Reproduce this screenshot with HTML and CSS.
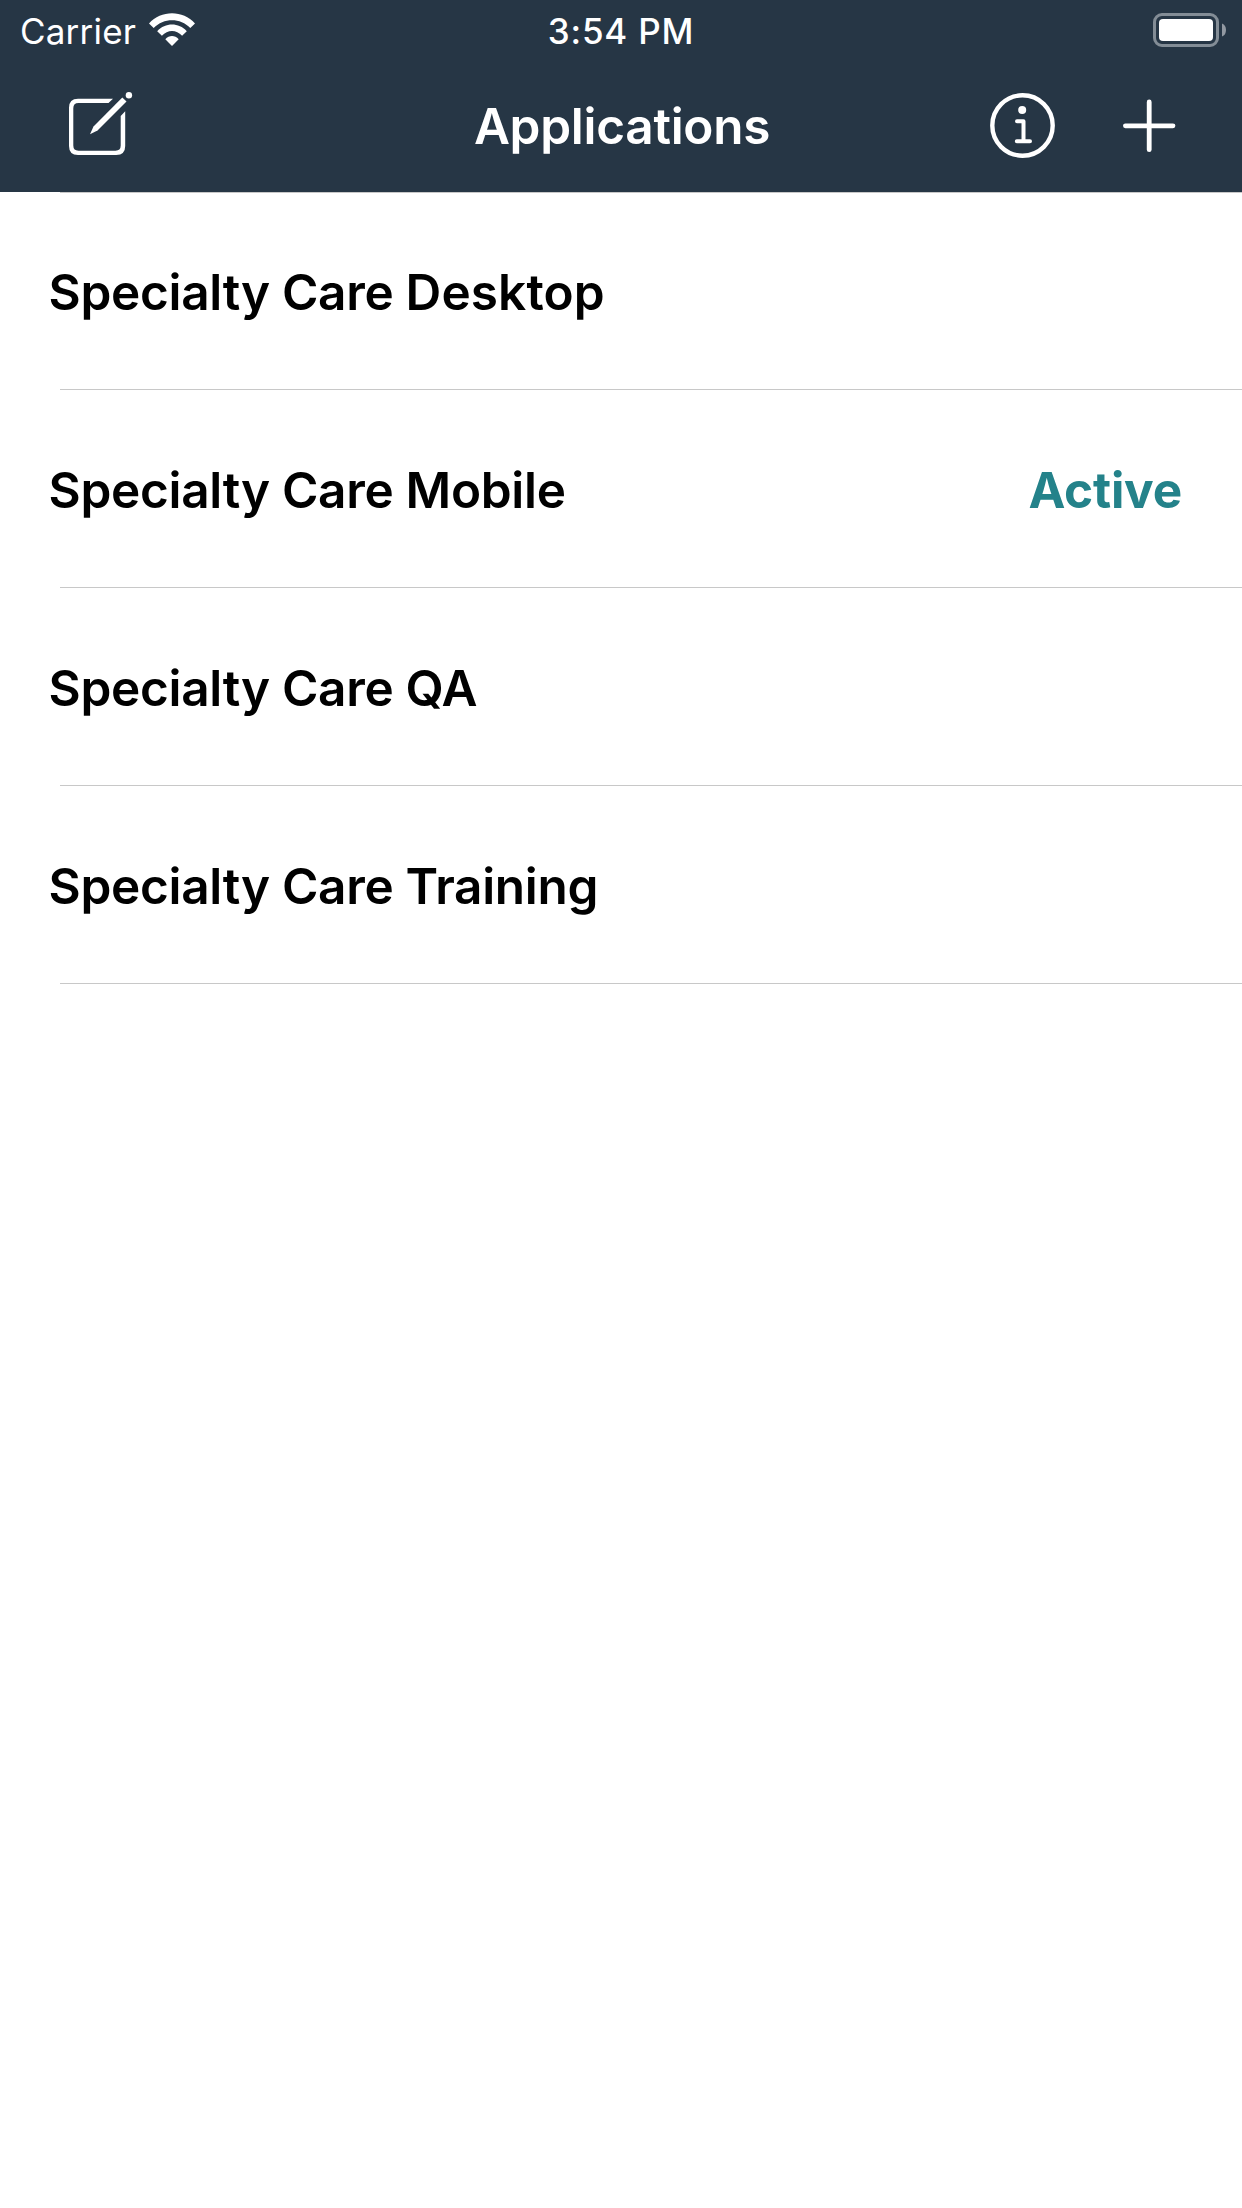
FILE: index.html
```html
<!DOCTYPE html>
<html lang="en">
<head>
<meta charset="utf-8">
<title>Applications</title>
<link rel="stylesheet" href="styles.css">
</head>
<body>
<header class="top">
  <div class="status">
    <div class="status-left">
      <span class="carrier">Carrier</span>
      <svg class="wifi" width="46" height="36" viewBox="149 13 46 36" fill="#fff">
        <path d="M149 23.500C161 9.800 183 9.800 195 23.500L190.300 28.100C180.500 17.700 163.500 17.700 153.700 28.100Z"/>
        <path d="M157.200 31.200C165.300 22.300 178.700 22.300 186.800 31.200L182.100 35.800C176.300 29.500 167.700 29.500 161.900 35.800Z"/>
        <path d="M165.300 39.200C169.200 35 174.800 35 178.700 39.200L172 46Z"/>
      </svg>
    </div>
    <span class="time">3:54 PM</span>
    <div class="status-right">
      <svg class="battery" width="74" height="36" viewBox="1153 13 74 36">
        <rect x="1154.500" y="14.500" width="63" height="31" rx="7.500" fill="none" stroke="#838d96" stroke-width="3"/>
        <rect x="1159" y="19" width="54" height="22" rx="4" fill="#fff"/>
        <path d="M1222 23.500Q1226 25 1226 30T1222 36.500Z" fill="#9299a2"/>
      </svg>
    </div>
  </div>
  <div class="nav">
    <div class="nav-left">
      <svg width="66" height="70" viewBox="68 91 66 70" fill="#fff">
        <path d="M113 98.700L108.500 103H78.500Q73.300 103 73.300 108.200V145.500Q73.300 150.700 78.500 150.700H115.500Q120.700 150.700 120.700 145.500V116L125.200 111.200V146Q125.200 155 116.200 155H78Q69 155 69 146V107.700Q69 98.700 78 98.700Z"/>
        <path d="M90 134.300L93.500 126.500L122.300 97.500L126.500 101.500L97.500 130.500Z"/>
        <circle cx="128.900" cy="95.300" r="3.200"/>
      </svg>
    </div>
    <h1 class="title">Applications</h1>
    <div class="nav-right">
      <svg width="66" height="66" viewBox="990 93 66 66" fill="none" stroke="#fff" stroke-linecap="round" stroke-linejoin="round">
        <circle cx="1022.500" cy="125.500" r="30.200" stroke-width="4.400"/>
        <circle cx="1022.200" cy="110" r="4" fill="#fff" stroke="none"/>
        <path d="M1017 121.300H1023.500V141M1016.800 141.200H1030" stroke-width="4"/>
      </svg>
      <svg width="54" height="54" viewBox="1122 99 54 54" stroke="#fff" stroke-width="4.800" stroke-linecap="round">
        <path d="M1149.200 102V149.700M1125.400 125.800H1173"/>
      </svg>
    </div>
  </div>
</header>
<main class="list">
  <div class="row"><span class="name">Specialty Care <span class="loose">Desktop</span></span></div>
  <div class="row"><span class="name">Specialty Care Mobile</span><span class="active">Active</span></div>
  <div class="row"><span class="name">Specialty Care QA</span></div>
  <div class="row"><span class="name">Specialty Care Training</span></div>
</main>
</body>
</html>
```
FILE: styles.css
```css
* { box-sizing: border-box; }
body {
  margin: 0;
  min-height: 2208px;
  background: #fff;
  color: #000;
  font-family: Inter, "Liberation Sans", sans-serif;
}
.top {
  height: 192px;
  background: #263645;
  color: #fff;
}
.status {
  display: grid;
  grid-template-columns: 1fr auto 1fr;
  align-items: center;
  height: 60px;
  padding: 2px 15px 0;
  font-size: 35px;
  line-height: 58px;
}
.status-left {
  display: flex;
  align-items: center;
  gap: 13px;
  padding-left: 5px;
}
.carrier { width: 116px; letter-spacing: 0.2px; }
.status-right { display: flex; justify-content: flex-end; }
.time { font-weight: 500; letter-spacing: 0.8px; }
.nav {
  display: grid;
  grid-template-columns: 1fr auto 1fr;
  align-items: center;
  height: 132px;
  padding: 0 66px 0 68px;
}
.title {
  margin: 0;
  font-size: 49.5px;
  font-weight: 600;
  letter-spacing: -0.27px;
  line-height: 132px;
}
.nav-right { display: flex; align-items: center; justify-content: flex-end; gap: 66px; }
.nav svg, .status svg { display: block; }
.list {
  background: linear-gradient(#c8c8c8, #c8c8c8) 60px 0 / 100% 1px no-repeat;
}
.row {
  display: flex;
  align-items: center;
  justify-content: space-between;
  height: 198px;
  padding: 2px 60px 0 48.5px;
  background: linear-gradient(#c8c8c8, #c8c8c8) 60px 100% / 100% 1px no-repeat;
  font-size: 49.5px;
  font-weight: 600;
}
.name { letter-spacing: -0.3px; }
.loose { letter-spacing: 0.1px; }
.active { color: #24828a; font-weight: 700; letter-spacing: -0.2px; }
```
